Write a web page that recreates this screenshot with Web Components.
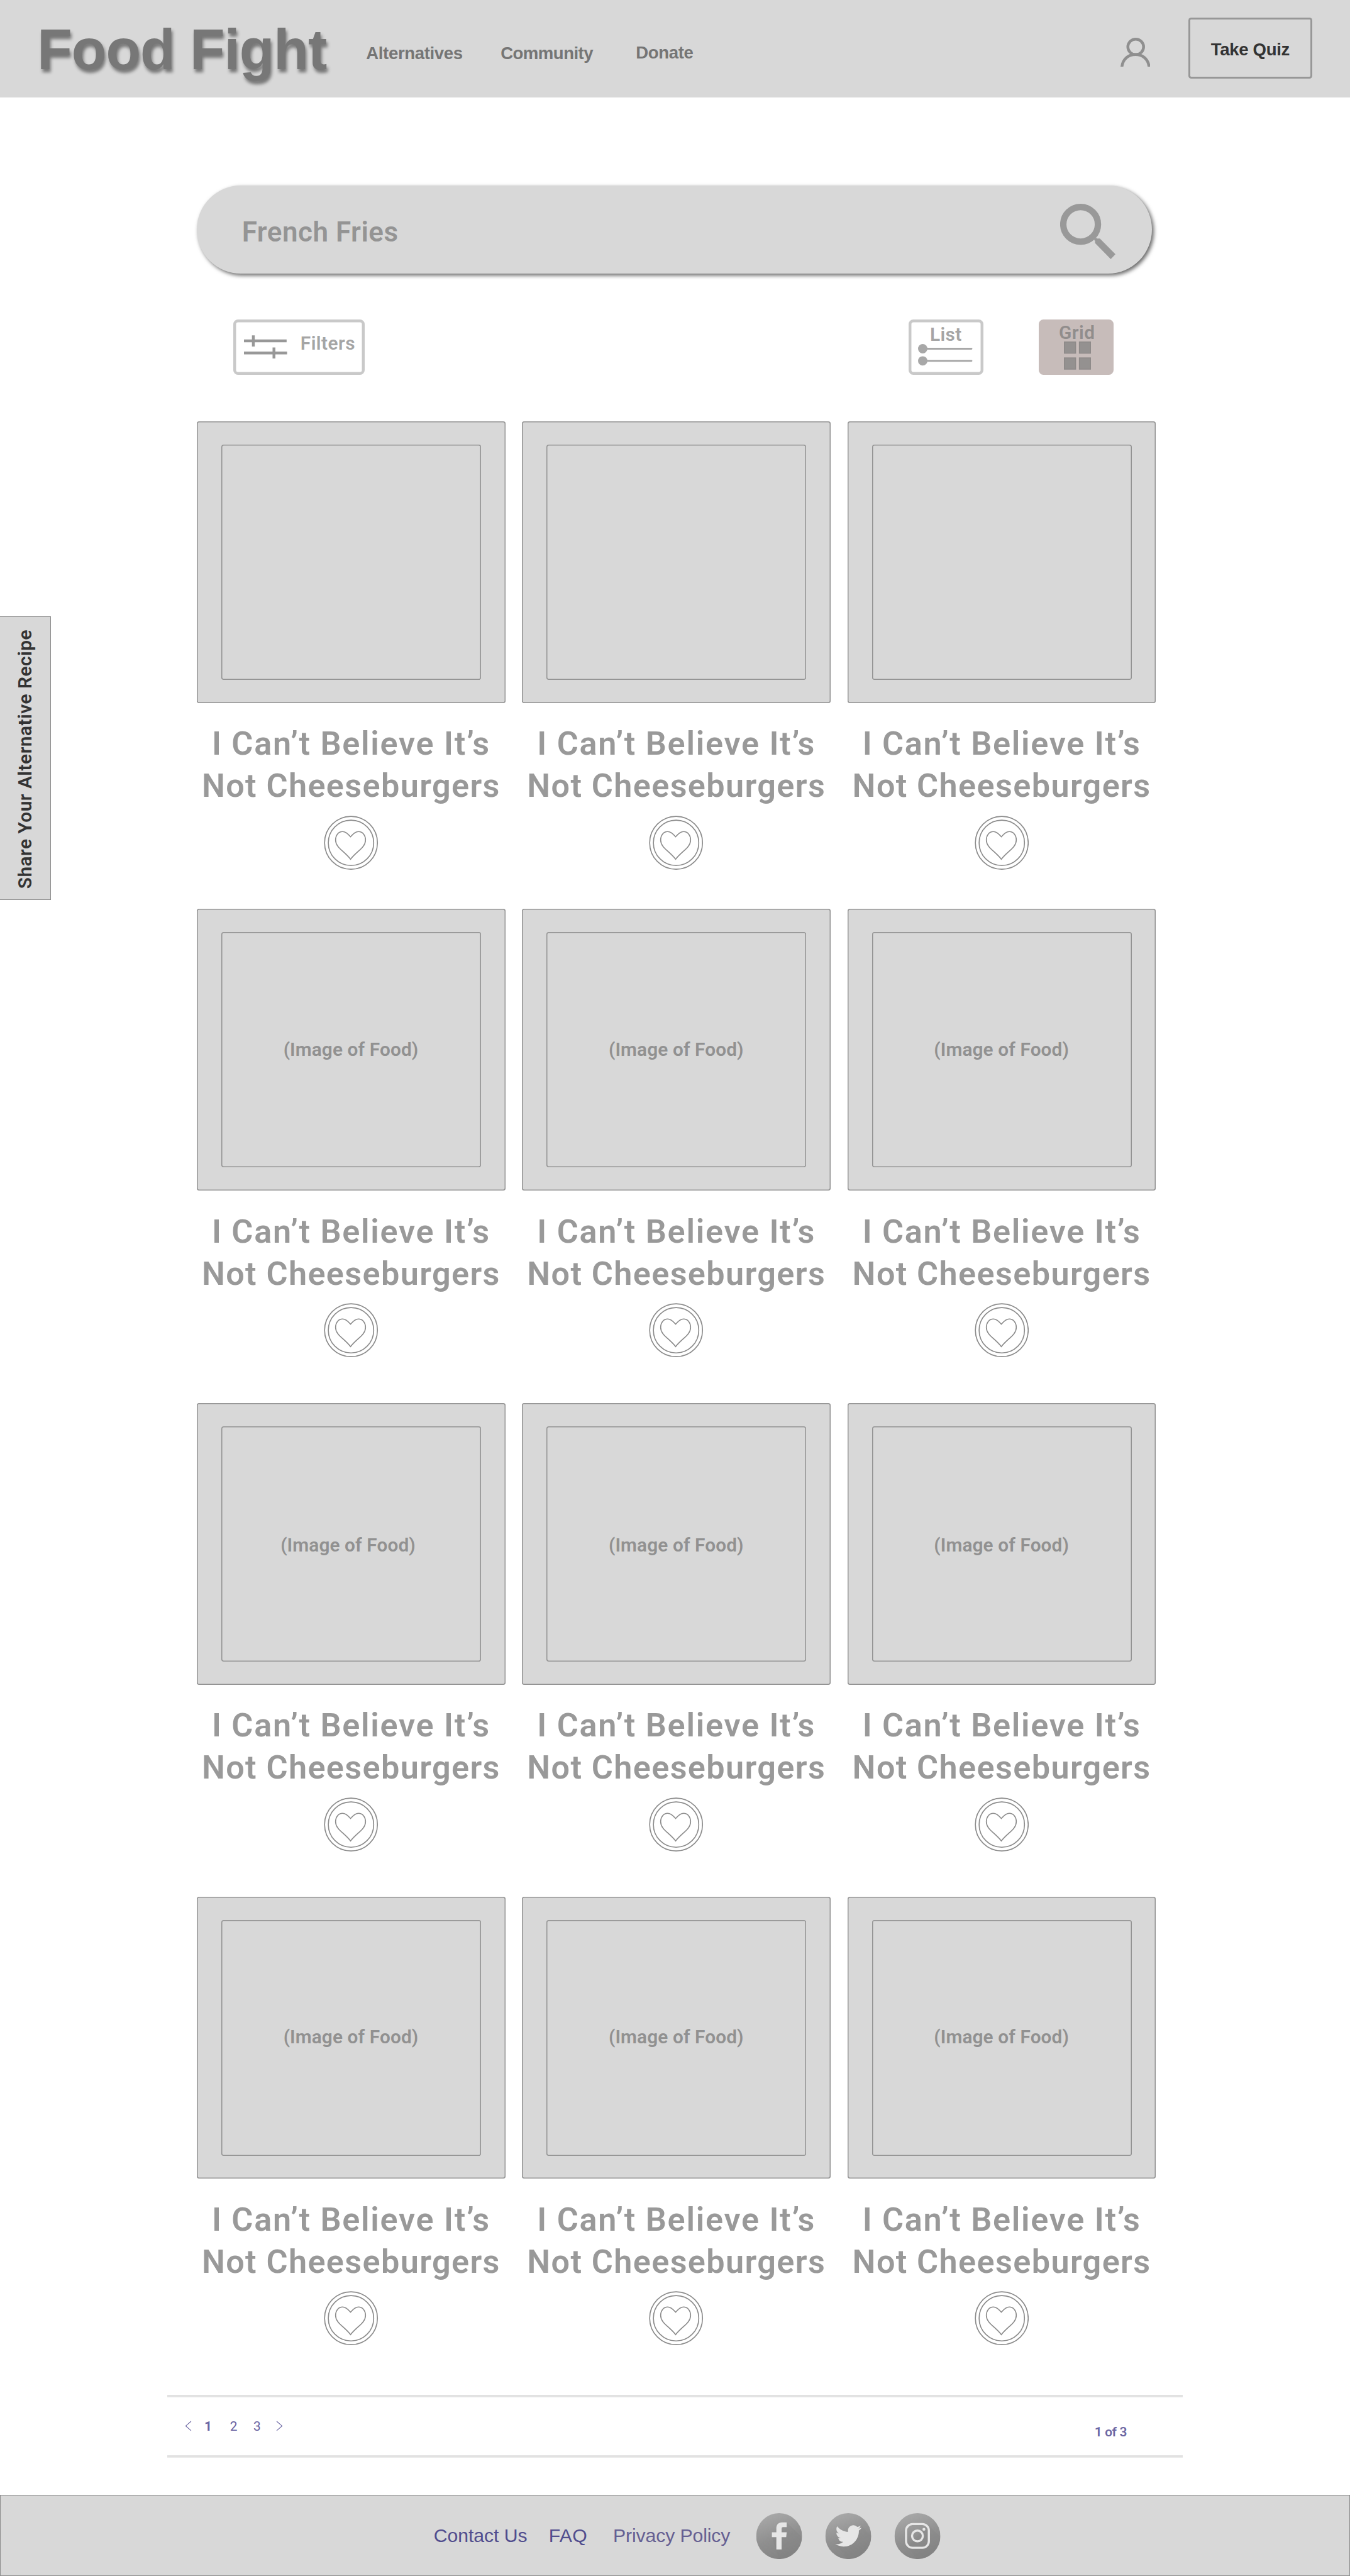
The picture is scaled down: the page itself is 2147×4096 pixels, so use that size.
<!DOCTYPE html>
<html lang="en">
<head>
<meta charset="utf-8">
<title>Food Fight</title>
<style>
/* 1rem = 10 design pixels of the 2880px artboard */
html{font-size:calc(100vw / 288);background:#fff}
body{margin:0;font-family:"Liberation Sans",Arial,sans-serif;position:relative}
</style>
</head>
<body>
<food-page></food-page>
<script>
const OVER = 'Roboto,"Open Sans",sans-serif';
const define = (name, html, after) => customElements.define(name, class extends HTMLElement {
  constructor(){ super(); this.attachShadow({mode:'open'}); }
  connectedCallback(){
    if (this.shadowRoot.childNodes.length) return;
    this.shadowRoot.innerHTML = typeof html === 'function' ? html(this) : html;
    if (after) after(this);
  }
});

define('food-page', `
<style>
:host{display:flex;flex-direction:column}
main{width:204.6rem;margin-left:42rem;display:flex;flex-direction:column}
recipe-row{margin-top:9.75rem}
recipe-row.first{margin-top:9.85rem}
recipe-row.second{margin-top:8.35rem}
</style>
<site-header></site-header>
<main>
  <search-bar>French Fries</search-bar>
  <result-toolbar></result-toolbar>
  <recipe-row class="first" empty></recipe-row>
  <recipe-row class="second"></recipe-row>
  <recipe-row dy="2" dx="-6"></recipe-row>
  <recipe-row dy="-2"></recipe-row>
</main>
<page-nav></page-nav>
<site-footer></site-footer>
<share-tab></share-tab>`);

define('site-header', `
<style>
:host{display:flex;align-items:flex-start;box-sizing:border-box;height:20.8rem;background:#d8d8d8;padding:0 8.05rem 0 7.95rem;font-weight:700;color:#757575}
.logo{font-size:12.2rem;margin-top:4.5rem;text-shadow:.3rem .7rem .7rem rgba(0,0,0,.45);color:#777;margin-right:8.45rem}
nav{display:flex;font-size:3.7rem}
nav fit-text{margin-top:9.55rem}
nav .b{margin-left:8.1rem}
nav .c{margin-left:9.15rem;margin-top:9.35rem}
.user{width:6.4rem;height:6.2rem;margin:8rem 8.1rem 0 auto}
.quiz{box-sizing:border-box;width:26.45rem;height:13rem;margin-top:3.8rem;border-radius:.6rem;box-shadow:inset 0 0 0 .4rem #979797;color:#333;font-size:3.7rem;display:flex;justify-content:center}
.quiz fit-text{margin-top:4.98rem}
</style>
<fit-text class="logo" w="617">Food Fight</fit-text>
<nav><fit-text w="206">Alternatives</fit-text><fit-text class="b" w="197">Community</fit-text><fit-text class="c" w="122.5">Donate</fit-text></nav>
<svg class="user" viewBox="0 0 64 62" fill="none" stroke="#8f8f8f" stroke-width="6"><ellipse cx="32.5" cy="19.5" rx="16.8" ry="16.5"/><path d="M3 62C5 45 17 36 32 36S59 45 61 62"/></svg>
<div class="quiz"><fit-text w="168">Take Quiz</fit-text></div>`);

define('search-bar', `
<style>
:host{display:flex;align-items:flex-start;box-sizing:border-box;width:203.8rem;height:18.8rem;margin-top:18.8rem;padding:0 7.8rem 0 9.6rem;border-radius:9.4rem;background:#d8d8d8;box-shadow:.4rem .4rem .8rem rgba(0,0,0,.6);font:600 5.9rem/1 ${OVER};color:#949494}
fit-text{margin-top:6.95rem}
svg{width:11.8rem;height:11.8rem;margin:3.85rem 0 0 auto}
</style>
<fit-text w="334"><slot></slot></fit-text>
<svg viewBox="0 0 118 118"><circle cx="43.7" cy="43.8" r="37" fill="none" stroke="#999" stroke-width="13.6"/><path fill="#999" d="M76.7 72.3L78.5 74H84.8L118 107.8 108 118 74.5 84V78.7L72 77Z"/></svg>`);

define('result-toolbar', `
<style>
:host{display:flex;align-items:flex-start;margin-top:9.8rem;padding-left:7.8rem;font:600 4rem/1 ${OVER};color:#a5a5a5}
div{box-sizing:border-box;height:11.8rem;padding-top:.6rem;box-shadow:inset 0 0 0 .6rem #c9c9c9;border-radius:1rem;display:flex}
.filters{width:28rem;align-items:flex-start;padding-left:2.3rem}
.filters svg{width:9.2rem;height:5rem;margin:2.7rem 2.8rem 0 0}
.filters fit-text{margin-top:2.37rem}
.list,.grid{width:16rem;flex-direction:column;align-items:center}
.list{margin-left:116rem}
.list fit-text{margin-top:.55rem}
.list svg{width:11.8rem;height:4.6rem;margin-top:.08rem}
.grid{margin-left:11.8rem;background:#c7bcba;box-shadow:none;color:#918d8c}
.grid fit-text{margin:.15rem 0 0 .3rem}
.grid svg{width:5.8rem;height:6rem;margin:-.1rem 0 0 .6rem}
</style>
<div class="filters"><svg viewBox="0 0 92 50" stroke="#989898" stroke-width="6"><path d="M0 12H91M0 38H92M20 .5V24M64 26V50"/></svg><fit-text w="117">Filters</fit-text></div>
<div class="list"><fit-text w="68">List</fit-text><svg viewBox="0 0 118 46" fill="#a8a8a8"><circle cx="10" cy="10" r="10"/><circle cx="10" cy="36" r="10"/><path d="M10 10H114M10 36H114" stroke="#a8a8a8" stroke-width="4" stroke-linecap="round"/></svg></div>
<div class="grid"><fit-text w="77">Grid</fit-text><svg viewBox="0 0 58 60" fill="#949190" stroke="#8e8a89" stroke-width="2"><rect x="1" y="1" width="24" height="24"/><rect x="33" y="1" width="24" height="24"/><rect x="1" y="35" width="24" height="24"/><rect x="33" y="35" width="24" height="24"/></svg></div>`);

define('recipe-row', el => {
  const caption = el.hasAttribute('empty') ? '' : '(Image of Food)';
  const dx = el.getAttribute('dx') || 0, dy = el.getAttribute('dy') || 0;
  const card = x => `<recipe-card style="--dx:${x / 10}rem;--dy:${dy / 10}rem">${caption}</recipe-card>`;
  return `<style>:host{display:flex;gap:3.6rem}</style>${card(dx)}${card(0)}${card(0)}`;
});

define('recipe-card', el => `
<style>
:host{display:flex;flex-direction:column;align-items:center;width:65.8rem;height:95.65rem;font:600 7rem/1 ${OVER};color:#999}
.frame{width:65.8rem;height:60.2rem;background:#d8d8d8;box-shadow:inset 0 0 0 .2rem #939393;border-radius:.5rem;display:flex;align-items:center;justify-content:center}
.photo{width:55.4rem;height:50.2rem;box-shadow:inset 0 0 0 .2rem #939393;border-radius:.5rem;display:flex;justify-content:center;align-items:flex-start;font-size:4rem;color:#919191}
.photo fit-text{margin:calc(23.15rem + var(--dy)) 0 0 calc(-.1rem + 2 * var(--dx))}
h2{margin:4.25rem 0 0;font:inherit;line-height:9rem;display:flex;flex-direction:column;align-items:center}
h2 fit-text{--lh:9rem}
svg{width:11.6rem;height:11.6rem;margin-top:1.75rem}
</style>
<div class="frame"><div class="photo">${el.textContent ? '<fit-text w="288"><slot></slot></fit-text>' : ''}</div></div>
<h2><fit-text w="594">I Can’t Believe It’s</fit-text><fit-text w="637">Not Cheeseburgers</fit-text></h2>
<svg viewBox="0 0 116 116" fill="none" stroke="#8b8b8b" stroke-width="2.2"><circle cx="58" cy="58" r="56.5"/><circle cx="58" cy="58" r="48.5"/><path d="M57 45C50 37 44 34 40 34C31 34 25 42 25 52C25 68 44 76 57 93C70 76 89 68 89 52C89 42 83 34 74 34C70 34 64 37 57 45Z"/></svg>`);

define('page-nav', `
<style>
:host{display:flex;align-items:flex-start;box-sizing:border-box;width:216.7rem;height:13.4rem;margin:10.5rem 0 0 35.65rem;padding:.5rem 11.95rem 0 3.95rem;background:linear-gradient(#e2e2e2,#e2e2e2) 0 0/100% .5rem no-repeat,linear-gradient(#e2e2e2,#e2e2e2) 0 100%/100% .5rem no-repeat;font:400 2.8rem/1 ${OVER};color:#6b66a3}
svg{width:1.2rem;height:2rem;margin-top:5.2rem;overflow:visible}
span{width:2rem;text-align:center;margin-top:4.9rem}
.p1{margin-left:2.6rem;font-weight:700}.p2{margin-left:3.45rem}.p3{margin-left:3rem;margin-right:3.15rem}
fit-text{margin:6.1rem 0 0 auto;font-weight:600}
</style>
<svg viewBox="0 0 12 20" fill="none" stroke="#6b66a3" stroke-width="1.5"><path d="M12 0L.5 10 12 20"/></svg>
<span class="p1">1</span><span class="p2">2</span><span class="p3">3</span>
<svg viewBox="0 0 12 20" fill="none" stroke="#6b66a3" stroke-width="1.5"><path d="M0 0L11.5 10 0 20"/></svg>
<fit-text w="69">1 of 3</fit-text>`);

define('site-footer', `
<style>
:host{display:flex;align-items:flex-start;box-sizing:border-box;height:17.2rem;margin-top:8rem;background:#d8d8d8;border:1.5px solid #8c8c8c;padding-left:92.4rem;font-size:4.05rem;color:#514d8e}
fit-text{margin-top:6.5rem}
.faq{margin-left:4.6rem}.privacy{margin-left:5.5rem;color:#655f92}
social-icon{margin:3.7rem 0 0 4.85rem}
social-icon.first{margin-left:5.4rem}
</style>
<fit-text w="199.5">Contact Us</fit-text><fit-text class="faq" w="82">FAQ</fit-text><fit-text class="privacy" w="250">Privacy Policy</fit-text>
<social-icon class="first" kind="facebook"></social-icon><social-icon kind="twitter"></social-icon><social-icon kind="instagram"></social-icon>`);

const GLYPHS = {
  facebook: `<path fill="#808080" opacity=".22" d="M198 60L298 160V298H150L102 156Z"/><path fill="#e6e6e6" d="M198 60V91H174Q165 91 165 101V124H198L195 156H165V236H131V156H102V124H131V97C131 75 145 60 167 60Z"/>`,
  twitter: `<path fill="#808080" opacity=".18" d="M234 84L298 148V298H148L66 203Z"/><path fill="#e6e6e6" transform="translate(65 63) scale(7.08)" d="M23.953 4.57a10 10 0 01-2.825.775 4.958 4.958 0 002.163-2.723c-.951.555-2.005.959-3.127 1.184a4.92 4.92 0 00-8.384 4.482C7.69 8.095 4.067 6.13 1.64 3.162a4.822 4.822 0 00-.666 2.475c0 1.71.87 3.213 2.188 4.096a4.904 4.904 0 01-2.228-.616v.06a4.923 4.923 0 003.946 4.827 4.996 4.996 0 01-2.212.085 4.936 4.936 0 004.604 3.417 9.867 9.867 0 01-6.102 2.105c-.39 0-.779-.023-1.17-.067a13.995 13.995 0 007.557 2.209c9.053 0 13.998-7.496 13.998-13.985 0-.21 0-.42-.015-.63A9.935 9.935 0 0024 4.59z"/>`,
  instagram: `<path fill="#808080" opacity=".18" d="M218 76L298 156V298H150L82 220Z"/><g fill="none" stroke="#e6e6e6" stroke-width="14"><rect x="75" y="71" width="148" height="154" rx="42"/><circle cx="149" cy="148" r="35"/></g><circle cx="191" cy="105" r="9.5" fill="#e6e6e6"/>`
};
define('social-icon', el => `
<style>:host{display:block;width:9.95rem;height:9.8rem}svg{display:block;width:100%;height:100%}</style>
<svg viewBox="0 0 298 298"><defs><linearGradient id="g" x1=".25" y1="0" x2=".6" y2="1"><stop offset="0" stop-color="#a9a9a9"/><stop offset=".55" stop-color="#8f8f8f"/><stop offset="1" stop-color="#838383"/></linearGradient><clipPath id="c"><circle cx="149" cy="149" r="149"/></clipPath></defs>
<g clip-path="url(#c)"><rect width="298" height="298" fill="url(#g)"/>${GLYPHS[el.getAttribute('kind')]}</g></svg>`);

define('share-tab', `
<style>
:host{position:absolute;left:0;top:131.4rem;box-sizing:border-box;width:10.8rem;height:60.6rem;background:#d8d8d8;border:1.5px solid #8c8c8c;border-left:0;font:600 4rem/1 ${OVER};color:#333;display:flex;align-items:flex-start}
fit-text{writing-mode:vertical-rl;transform:rotate(180deg);margin:2.7rem 0 0 3.3rem}
</style>
<fit-text w="553" vertical>Share Your Alternative Recipe</fit-text>`);

/* Tracks its text out (or in) so that the run measures exactly w design pixels. */
define('fit-text', `<style>:host{display:block;white-space:nowrap;line-height:var(--lh,1);flex:none;width:max-content;height:max-content}</style><slot></slot>`, el => {
  const vertical = el.hasAttribute('vertical');
  const box = el.getBoundingClientRect();
  const target = el.getAttribute('w') / 10 * parseFloat(getComputedStyle(document.documentElement).fontSize);
  const slot = el.querySelector('slot');
  const text = (slot ? slot.assignedNodes({flatten:true}).map(n => n.textContent).join('') : el.textContent).trim();
  el.style.letterSpacing = (target - (vertical ? box.height : box.width)) / text.length + 'px';
});
</script>
</body>
</html>
